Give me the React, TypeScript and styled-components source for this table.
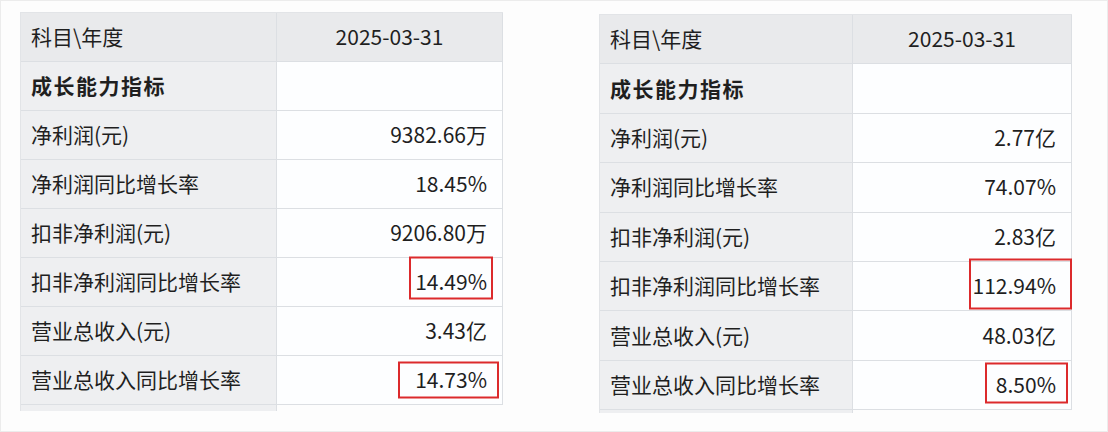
import styled, { createGlobalStyle } from "styled-components";

const GlobalStyle = createGlobalStyle`
  html, body {
    margin: 0;
    padding: 0;
    background: #ffffff;
  }
  body {
    font-family: "Noto Sans CJK SC", "Noto Sans", sans-serif;
    color: #222;
  }
`;

const Frame = styled.div`
  box-sizing: border-box;
  width: 1108px;
  height: 432px;
  overflow: hidden;
  border: 1px solid #ececec;
  background: #fdfdfd;
  display: flex;
  align-items: flex-start;
  padding: 11px 0 0 19px;
  gap: 96px;
`;

const Table = styled.div<{ $label: number; $value: number; $row: number; $top: number }>`
  display: grid;
  grid-template-columns: ${(p) => p.$label}px ${(p) => p.$value}px;
  grid-template-rows: repeat(8, ${(p) => p.$row}px);
  grid-auto-rows: auto;
  margin-top: ${(p) => p.$top}px;
  border-top: 1px solid #e2e4e7;
  border-left: 1px solid #e2e4e7;
`;

const Cell = styled.div<{ $kind: "head" | "label" | "value" | "date" }>`
  position: relative;
  box-sizing: border-box;
  display: flex;
  align-items: center;
  font-size: 21px;
  line-height: 1;
  color: #1f1f1f;
  border-right: 1px solid #dcdfe3;
  border-bottom: 1px solid #dcdfe3;
  padding: 0 10px 1px 10px;
  background: ${(p) =>
    p.$kind === "head" || p.$kind === "date"
      ? "#e9eaec"
      : p.$kind === "label"
      ? "#eeeff1"
      : "#fdfeff"};
  justify-content: ${(p) =>
    p.$kind === "value" ? "flex-end" : p.$kind === "date" ? "center" : "flex-start"};
  ${(p) => (p.$kind === "value" ? "padding-right: 15px;" : "")}
`;

const Section = styled.span`
  font-weight: 700;
  letter-spacing: 1.5px;
`;

const Tail = styled.div<{ $h: number; $gray?: boolean }>`
  height: ${(p) => p.$h}px;
  background: ${(p) => (p.$gray ? "#eeeff1" : "transparent")};
  border-right: ${(p) => (p.$gray ? "1px solid #dcdfe3" : "none")};
`;

const Highlight = styled.span<{ $w: number; $h: number; $r: number; $dy: number }>`
  position: absolute;
  right: ${(p) => p.$r}px;
  top: calc(50% + ${(p) => p.$dy}px);
  width: ${(p) => p.$w}px;
  height: ${(p) => p.$h}px;
  transform: translateY(-50%);
  box-sizing: border-box;
  border: 2.5px solid #dc2a2c;
  pointer-events: none;
`;

type Mark = { w: number; h: number; r: number; dy: number };
type Row = { label: string; value: string; mark?: Mark };

type Sheet = {
  label: number;
  value: number;
  row: number;
  top: number;
  tail: number;
  rows: Row[];
};

const sheets: Sheet[] = [
  {
    label: 256,
    value: 226,
    row: 49,
    top: 0,
    tail: 6,
    rows: [
      { label: "净利润(元)", value: "9382.66万" },
      { label: "净利润同比增长率", value: "18.45%" },
      { label: "扣非净利润(元)", value: "9206.80万" },
      {
        label: "扣非净利润同比增长率",
        value: "14.49%",
        mark: { w: 84, h: 43, r: 9, dy: -4 },
      },
      { label: "营业总收入(元)", value: "3.43亿" },
      {
        label: "营业总收入同比增长率",
        value: "14.73%",
        mark: { w: 101, h: 37, r: 3, dy: 0 },
      },
    ],
  },
  {
    label: 253,
    value: 219,
    row: 49.4,
    top: 2,
    tail: 3,
    rows: [
      { label: "净利润(元)", value: "2.77亿" },
      { label: "净利润同比增长率", value: "74.07%" },
      { label: "扣非净利润(元)", value: "2.83亿" },
      {
        label: "扣非净利润同比增长率",
        value: "112.94%",
        mark: { w: 103, h: 51, r: -1, dy: -2 },
      },
      { label: "营业总收入(元)", value: "48.03亿" },
      {
        label: "营业总收入同比增长率",
        value: "8.50%",
        mark: { w: 83, h: 41, r: 3, dy: -2 },
      },
    ],
  },
];

const App = () => {
  return (
    <>
      <GlobalStyle />
      <Frame>
        {sheets.map((s, i) => (
          <Table key={i} $label={s.label} $value={s.value} $row={s.row} $top={s.top}>
            <Cell $kind="head">科目\年度</Cell>
            <Cell $kind="date">2025-03-31</Cell>
            <Cell $kind="label">
              <Section>成长能力指标</Section>
            </Cell>
            <Cell $kind="value" />
            {s.rows.map((r) => (
              <>
                <Cell key={r.label} $kind="label">
                  {r.label}
                </Cell>
                <Cell key={r.label + "-v"} $kind="value">
                  {r.value}
                  {r.mark && (
                    <Highlight $w={r.mark.w} $h={r.mark.h} $r={r.mark.r} $dy={r.mark.dy} />
                  )}
                </Cell>
              </>
            ))}
            <Tail $h={s.tail} $gray />
            <Tail $h={s.tail} />
          </Table>
        ))}
      </Frame>
    </>
  );
};

export default App;
